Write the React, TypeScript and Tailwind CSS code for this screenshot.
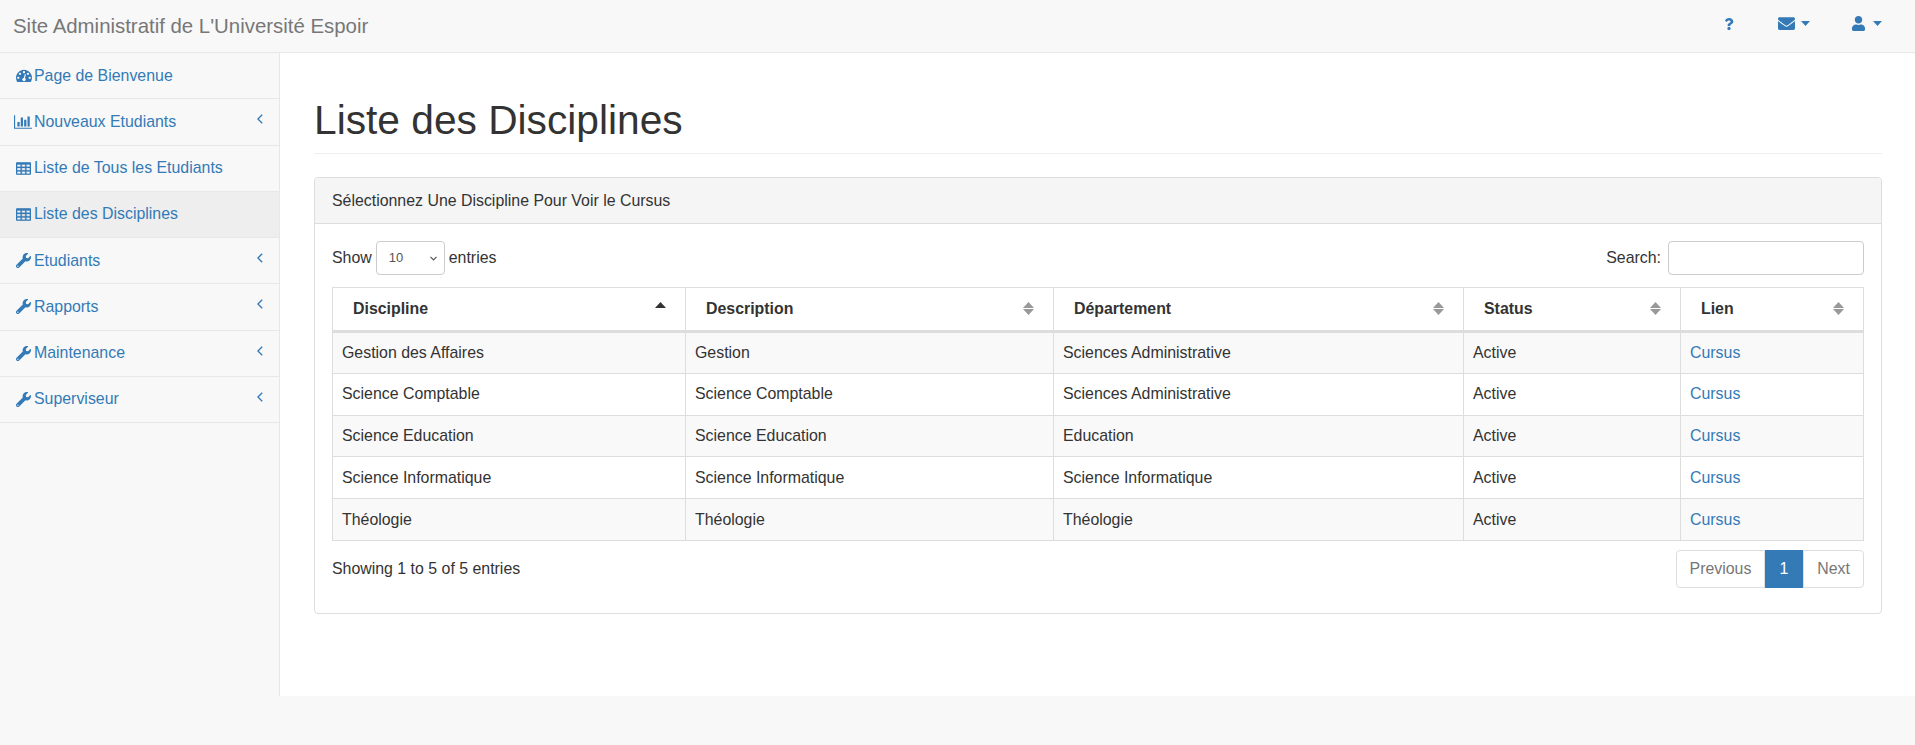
import type { ReactNode } from 'react';
import { FaWrench, FaEnvelope, FaUser, FaQuestion } from 'react-icons/fa';

const GaugeIcon = () => (
  <svg viewBox="0 192 1792 1408" className="w-[16px] h-[13px]" fill="currentColor">
    <path d="M384 1152q0-53-37.5-90.5t-90.5-37.5-90.5 37.5-37.5 90.5 37.5 90.5 90.5 37.5 90.5-37.5 37.5-90.5zm192-448q0-53-37.5-90.5t-90.5-37.5-90.5 37.5-37.5 90.5 37.5 90.5 90.5 37.5 90.5-37.5 37.5-90.5zm428 481l101-382q6-26-7.5-48.5t-38.5-29.5-48 6.5-30 39.5l-101 382q-60 5-107 43.5t-63 98.5q-20 77 20 146t117 89 146-20 89-117q16-60-6-117t-72-91zm660-33q0-53-37.5-90.5t-90.5-37.5-90.5 37.5-37.5 90.5 37.5 90.5 90.5 37.5 90.5-37.5 37.5-90.5zm-640-640q0-53-37.5-90.5t-90.5-37.5-90.5 37.5-37.5 90.5 37.5 90.5 90.5 37.5 90.5-37.5 37.5-90.5zm448 192q0-53-37.5-90.5t-90.5-37.5-90.5 37.5-37.5 90.5 37.5 90.5 90.5 37.5 90.5-37.5 37.5-90.5zm320 448q0 261-141 483-19 29-54 29h-1402q-35 0-54-29-141-221-141-483 0-182 71-348t191-286 286-191 348-71 348 71 286 191 191 286 71 348z" />
  </svg>
);

const BarChartIcon = () => (
  <svg viewBox="0 0 2048 1792" className="w-[18px] h-[16px] -ml-[1px]" fill="currentColor">
    <path d="M640 896v512h-256v-512h256zm384-512v1024h-256v-1024h256zm1024 1152v128h-2048v-1536h128v1408h1920zm-640-896v768h-256v-768h256zm384-384v1152h-256v-1152h256z" />
  </svg>
);

const TableIcon = () => (
  <svg viewBox="0 128 1664 1408" className="w-[15px] h-[13px]" fill="currentColor" stroke="currentColor" strokeWidth="36">
    <path d="M512 1376v-192q0-14-9-23t-23-9h-320q-14 0-23 9t-9 23v192q0 14 9 23t23 9h320q14 0 23-9t9-23zm0-384v-192q0-14-9-23t-23-9h-320q-14 0-23 9t-9 23v192q0 14 9 23t23 9h320q14 0 23-9t9-23zm512 384v-192q0-14-9-23t-23-9h-320q-14 0-23 9t-9 23v192q0 14 9 23t23 9h320q14 0 23-9t9-23zm-512-768v-192q0-14-9-23t-23-9h-320q-14 0-23 9t-9 23v192q0 14 9 23t23 9h320q14 0 23-9t9-23zm512 384v-192q0-14-9-23t-23-9h-320q-14 0-23 9t-9 23v192q0 14 9 23t23 9h320q14 0 23-9t9-23zm512 384v-192q0-14-9-23t-23-9h-320q-14 0-23 9t-9 23v192q0 14 9 23t23 9h320q14 0 23-9t9-23zm-512-768v-192q0-14-9-23t-23-9h-320q-14 0-23 9t-9 23v192q0 14 9 23t23 9h320q14 0 23-9t9-23zm512 384v-192q0-14-9-23t-23-9h-320q-14 0-23 9t-9 23v192q0 14 9 23t23 9h320q14 0 23-9t9-23zm0-384v-192q0-14-9-23t-23-9h-320q-14 0-23 9t-9 23v192q0 14 9 23t23 9h320q14 0 23-9t9-23zm128-320v1088q0 66-47 113t-113 47h-1344q-66 0-113-47t-47-113v-1088q0-66 47-113t113-47h1344q66 0 113 47t47 113z" />
  </svg>
);

const Caret = ({ className = '' }: { className?: string }) => (
  <svg viewBox="0 0 9 5" className={`w-[9px] h-[5px] ${className}`} fill="currentColor">
    <path d="M0 0h9L4.5 5z" />
  </svg>
);

const AngleLeft = () => (
  <svg viewBox="0 0 6 10" className="w-[6px] h-[10px] ml-auto mb-[5px]" fill="none" stroke="currentColor" strokeWidth="1.4">
    <path d="M5.2.7.9 5l4.3 4.3" />
  </svg>
);

const SortIcon = ({ active }: { active?: boolean }) => (
  <svg viewBox="0 0 11 13" className="w-[11px] h-[13px] shrink-0">
    <path d="M5.5 0 11 6H0z" fill={active ? '#333333' : '#999999'} />
    {!active && <path d="M5.5 13 11 7H0z" fill="#999999" />}
  </svg>
);

type NavItem = { label: string; icon: ReactNode; arrow?: boolean; active?: boolean };

const navItems: NavItem[] = [
  { label: 'Page de Bienvenue', icon: <GaugeIcon /> },
  { label: 'Nouveaux Etudiants', icon: <BarChartIcon />, arrow: true },
  { label: 'Liste de Tous les Etudiants', icon: <TableIcon /> },
  { label: 'Liste des Disciplines', icon: <TableIcon />, active: true },
  { label: 'Etudiants', icon: <FaWrench size={15} />, arrow: true },
  { label: 'Rapports', icon: <FaWrench size={15} />, arrow: true },
  { label: 'Maintenance', icon: <FaWrench size={15} />, arrow: true },
  { label: 'Superviseur', icon: <FaWrench size={15} />, arrow: true },
];

const rows = [
  ['Gestion des Affaires', 'Gestion', 'Sciences Administrative'],
  ['Science Comptable', 'Science Comptable', 'Sciences Administrative'],
  ['Science Education', 'Science Education', 'Education'],
  ['Science Informatique', 'Science Informatique', 'Science Informatique'],
  ['Théologie', 'Théologie', 'Théologie'],
];

const columns = [
  { label: 'Discipline', width: 353, active: true },
  { label: 'Description', width: 368 },
  { label: 'Département', width: 410 },
  { label: 'Status', width: 217 },
  { label: 'Lien', width: 183 },
];

export default function App() {
  return (
    <div className="min-h-screen bg-[#f8f8f8] text-[#333333] text-[15.9px] font-['Liberation_Sans',Arial,sans-serif]">
      {/* Top bar */}
      <nav className="h-[53px] flex items-center border-b border-[#e7e7e7] pl-[13px]">
        <span className="text-[20.4px] text-[#777777]">Site Administratif de L'Université Espoir</span>
        <div className="ml-auto flex items-center text-[#337ab7] pr-[33px] pb-[5px]">
          <FaQuestion size={12} />
          <FaEnvelope size={17} className="ml-[43px]" />
          <Caret className="ml-[6px]" />
          <FaUser size={15} className="ml-[41px]" />
          <Caret className="ml-[7px]" />
        </div>
      </nav>

      <div className="flex h-[643px]">
        {/* Sidebar */}
        <aside className="w-[280px] shrink-0 border-r border-[#e7e7e7]">
          {navItems.map((item) => (
            <a
              key={item.label}
              href="#"
              className={`flex items-center h-[46.25px] border-b border-[#e7e7e7] pl-[13px] pr-[16px] text-[#337ab7] ${item.active ? 'bg-[#eeeeee]' : ''}`}
            >
              <span className="w-[21px] flex justify-center shrink-0">{item.icon}</span>
              <span>{item.label}</span>
              {item.arrow && <AngleLeft />}
            </a>
          ))}
        </aside>

        {/* Main */}
        <main className="flex-1 bg-white pl-[34px] pr-[34px]">
          <div className="mt-[42px] h-[59px] border-b border-[#eeeeee]">
            <h1 className="text-[40.7px] leading-[50px]">Liste des Disciplines</h1>
          </div>

          <section className="mt-[23px] h-[437px] border border-[#dddddd] rounded-[4px]">
            <div className="h-[46px] bg-[#f5f5f5] border-b border-[#dddddd] rounded-t-[4px] flex items-center pl-[17px]">
              Sélectionnez Une Discipline Pour Voir le Cursus
            </div>

            <div className="px-[17px] pt-[17px]">
              <div className="flex items-center justify-between h-[34px]">
                <label className="flex items-center">
                  Show
                  <span className="relative mx-[4px]">
                    <select className="block appearance-none w-[69px] h-[34px] border border-[#cccccc] rounded-[4px] bg-white pl-[12px] text-[13px] text-[#555555]">
                      <option>10</option>
                    </select>
                    <svg viewBox="0 0 7 5" className="absolute right-[8px] top-[15px] w-[7px] h-[5px] pointer-events-none" fill="none" stroke="#555555" strokeWidth="1.2">
                      <path d="M.5.8 3.5 3.8 6.5.8" />
                    </svg>
                  </span>
                  entries
                </label>
                <label className="flex items-center">
                  Search:
                  <input className="ml-[7px] w-[196px] h-[34px] border border-[#cccccc] rounded-[4px] bg-white" />
                </label>
              </div>

              <table className="mt-[12px] w-[1531px] table-fixed border-collapse">
                <colgroup>
                  {columns.map((c) => (
                    <col key={c.label} style={{ width: c.width }} />
                  ))}
                </colgroup>
                <thead>
                  <tr className="h-[44px]">
                    {columns.map((c) => (
                      <th key={c.label} className="border border-[#dddddd] border-b-[3px] pl-[20px] pr-[19px] text-left font-bold">
                        <div className="flex items-center justify-between">
                          <span>{c.label}</span>
                          <SortIcon active={c.active} />
                        </div>
                      </th>
                    ))}
                  </tr>
                </thead>
                <tbody>
                  {rows.map((r, i) => (
                    <tr key={r[0]} className={`h-[41.8px] ${i % 2 === 0 ? 'bg-[#f9f9f9]' : ''}`}>
                      {r.map((cell, j) => (
                        <td key={j} className="border border-[#dddddd] px-[9px]">{cell}</td>
                      ))}
                      <td className="border border-[#dddddd] px-[9px]">Active</td>
                      <td className="border border-[#dddddd] px-[9px]">
                        <a href="#" className="text-[#337ab7]">Cursus</a>
                      </td>
                    </tr>
                  ))}
                </tbody>
              </table>

              <div className="mt-[9px] flex items-start justify-between">
                <div className="pt-[7px]">Showing 1 to 5 of 5 entries</div>
                <div className="flex h-[38px] items-stretch">
                  <span className="flex items-center justify-center w-[89px] border border-[#dddddd] rounded-l-[4px] text-[#777777]">Previous</span>
                  <span className="flex items-center justify-center w-[38px] bg-[#337ab7] text-white">1</span>
                  <span className="flex items-center justify-center w-[61px] border border-[#dddddd] rounded-r-[4px] text-[#777777]">Next</span>
                </div>
              </div>
            </div>
          </section>
        </main>
      </div>
    </div>
  );
}
